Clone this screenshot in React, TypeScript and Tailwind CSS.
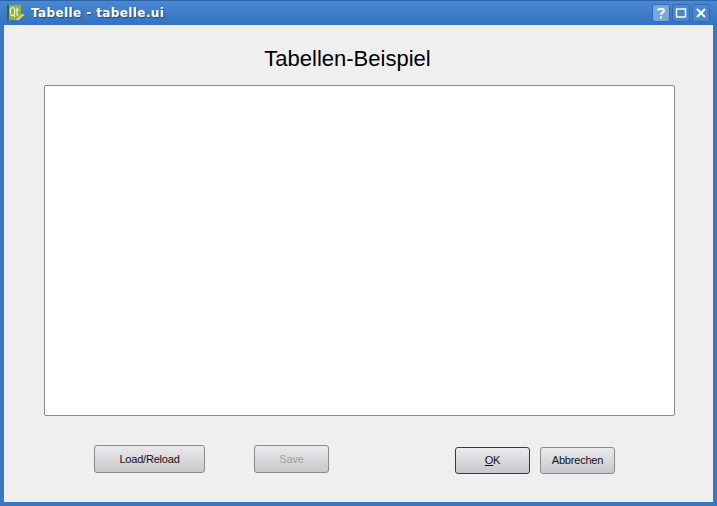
const sans = "font-['Liberation_Sans',Arial,sans-serif]";

function QtLogo() {
  return (
    <svg width="18" height="18" viewBox="0 0 18 18" className="shrink-0">
      <path d="M0 1 H14 V13 L11 16 H0 Z" fill="#8db53c" />
      <rect x="0" y="1" width="2" height="15" fill="#2c6e2e" />
      <path d="M5.5 3.5 C3.8 3.5 3.3 5.2 3.3 7.5 C3.3 9.8 3.8 11.5 5.5 11.5 C7.2 11.5 7.7 9.8 7.7 7.5 C7.7 5.2 7.2 3.5 5.5 3.5 Z M6.5 10.5 L8 13" fill="none" stroke="#f2f6e4" strokeWidth="1.1" />
      <path d="M10 3.5 V11 H11.5 M8.8 6 H12" fill="none" stroke="#f2f6e4" strokeWidth="1.1" />
      <path d="M9 15.5 L15.5 9.5 L17.5 11 L11 16.5 Z" fill="#e6d545" />
    </svg>
  );
}

function TitleButton({ active, children }: { active?: boolean; children: React.ReactNode }) {
  return (
    <div
      className={
        "w-[18px] h-[18px] rounded-[3px] border border-[#2f6cb4] flex items-center justify-center " +
        (active ? "bg-[#7ba6dc]" : "bg-[#4c86cd]")
      }
    >
      <svg width="12" height="12" viewBox="0 0 12 12">
        {children}
      </svg>
    </div>
  );
}

function PushButton({
  label,
  width,
  disabled,
  focused,
}: {
  label: React.ReactNode;
  width: string;
  disabled?: boolean;
  focused?: boolean;
}) {
  return (
    <button
      className={
        width +
        " rounded-[3px] border bg-gradient-to-b from-[#ebebee] to-[#c8c8cc] text-[11px] tracking-[-0.2px] " +
        (focused ? "border-[#3a3a3a] " : "border-[#8b8b8b] ") +
        (disabled ? "text-[#a0a0a0]" : "text-[#111111]")
      }
    >
      {label}
    </button>
  );
}

export default function App() {
  return (
    <div className={"w-[717px] h-[506px] flex flex-col bg-[#3a78c4] overflow-hidden " + sans}>
      {/* Title bar */}
      <div className="h-[25px] shrink-0 flex items-center pl-[7px] pr-[7px] bg-gradient-to-b from-[#4a88d2] to-[#3472bf] border-t border-[#2c64a8]">
        <QtLogo />
        <div className="ml-[6px] font-['DejaVu_Sans',sans-serif] text-[12px] font-bold tracking-[0.4px] text-white [text-shadow:1px_1px_1px_#1d4a85]">
          Tabelle - tabelle.ui
        </div>
        <div className="ml-auto flex gap-[2px]">
          <TitleButton active>
            <path d="M3 3.5 C3 1 9 1 9 3.5 C9 5.5 6 5.5 6 8" fill="none" stroke="#ffffff" strokeWidth="2" />
            <rect x="5" y="9.5" width="2" height="2" fill="#ffffff" />
          </TitleButton>
          <TitleButton>
            <rect x="1.5" y="2" width="9" height="8" fill="none" stroke="#ffffff" strokeWidth="1.4" />
          </TitleButton>
          <TitleButton>
            <path d="M2 2 L10 10 M10 2 L2 10" fill="none" stroke="#ffffff" strokeWidth="2" />
          </TitleButton>
        </div>
      </div>

      {/* Dialog body */}
      <div className="flex-1 mx-[4px] mb-[4px] bg-[#efefef] flex flex-col">
        <h1 className="mt-[19px] h-[30px] pr-[22px] text-center text-[22px] leading-[30px] text-black">
          Tabellen-Beispiel
        </h1>
        <div className="mt-[11px] ml-[40px] mr-[38px] h-[331px] bg-white border border-[#8a8a8a] rounded-[2px]" />
        <div className="flex items-start mt-[29px] pl-[90px]">
          <PushButton label="Load/Reload" width="w-[111px] h-[28px]" />
          <div className="ml-[49px]">
            <PushButton label="Save" width="w-[75px] h-[28px]" disabled />
          </div>
          <div className="ml-[126px] mt-[2px] flex gap-[10px]">
            <PushButton
              label={
                <>
                  <span className="underline">O</span>K
                </>
              }
              width="w-[75px] h-[27px]"
              focused
            />
            <PushButton label="Abbrechen" width="w-[75px] h-[27px]" />
          </div>
        </div>
      </div>
    </div>
  );
}
